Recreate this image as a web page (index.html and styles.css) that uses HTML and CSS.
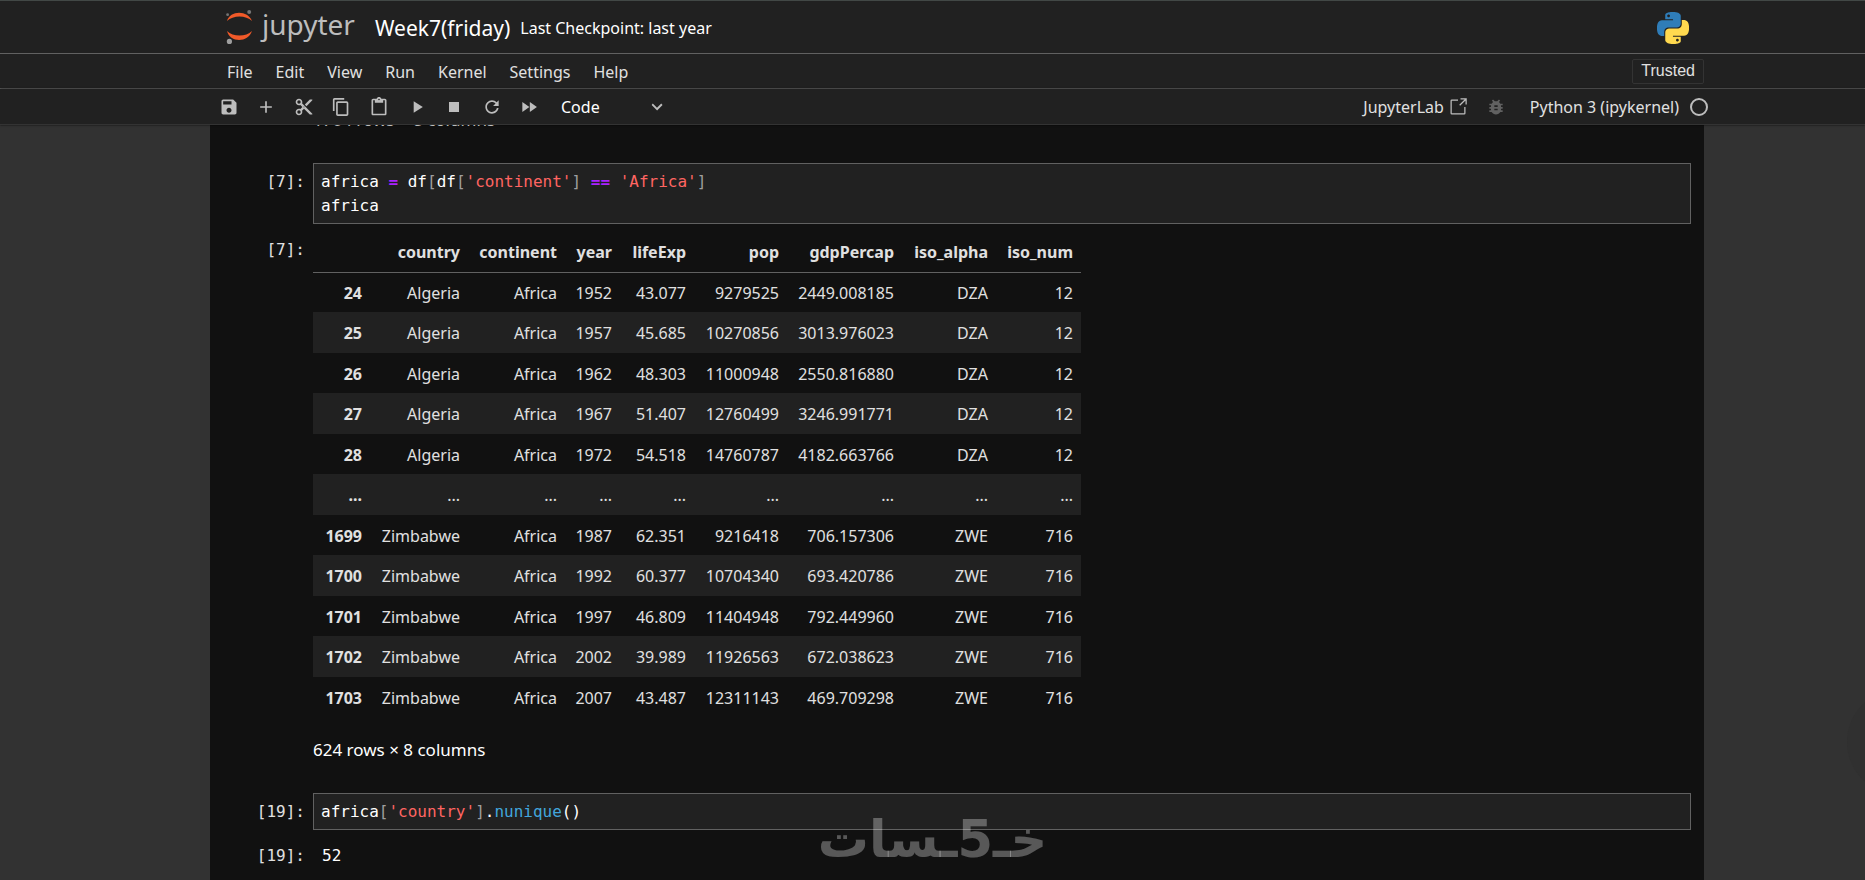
FILE: index.html
```html
<!DOCTYPE html>
<html lang="en">
<head>
  <meta charset="UTF-8">
  <meta name="viewport" content="width=device-width, initial-scale=1.0">
  <title>Week7(friday)</title>
  <link rel="stylesheet" href="styles.css">
</head>
<body>
  <header class="top">
    <a class="logo" href="#">
      <svg width="28" height="35" viewBox="0 0 28 35" aria-hidden="true">
        <path fill="#f15a29" d="M1 11C4 0 22 0 26 11C20 5 7 5 1 11z"/>
        <path fill="#f15a29" d="M1 21C4 33 22 33 26 21C20 27 7 27 1 21z"/>
        <circle fill="#757575" cx="23.2" cy="2.1" r="2"/>
        <circle fill="#757575" cx="1.6" cy="4.7" r="1.4"/>
        <circle fill="#9e9e9e" cx="3.4" cy="31.4" r="2.6"/>
      </svg>
      <span>jupyter</span>
    </a>
    <h1>Week7(friday)</h1>
    <span class="checkpoint">Last Checkpoint: last year</span>
    <svg class="python" width="32" height="32" viewBox="0 0 24 24" aria-hidden="true">
      <defs>
        <path id="snake" d="M14.25.18l.9.2.73.26.59.3.45.32.34.34.25.34.16.33.1.3.04.26.02.2-.01.13V8.5l-.05.63-.13.55-.21.46-.26.38-.3.31-.33.25-.35.19-.35.14-.33.1-.3.07-.26.04-.21.02H8.77l-.69.05-.59.14-.5.22-.41.27-.33.32-.27.35-.2.36-.15.37-.1.35-.07.32-.04.27-.02.21v3.06H3.17l-.21-.03-.28-.07-.32-.12-.35-.18-.36-.26-.36-.36-.35-.46-.32-.59-.28-.73-.21-.88-.14-1.05-.05-1.23.06-1.22.16-1.04.24-.87.32-.71.36-.57.4-.44.42-.33.42-.24.4-.16.36-.1.32-.05.24-.01h.16l.06.01h8.16v-.83H6.18l-.01-2.75-.02-.37.05-.34.11-.31.17-.28.25-.26.31-.23.38-.2.44-.18.51-.15.58-.12.64-.1.71-.06.77-.04.84-.02 1.27.05zm-6.3 1.98l-.23.33-.08.41.08.41.23.34.33.22.41.09.41-.09.33-.22.23-.34.08-.41-.08-.41-.23-.33-.33-.22-.41-.09-.41.09z"/>
      </defs>
      <use href="#snake" fill="#2f7db8"/>
      <use href="#snake" fill="#ffd94f" transform="rotate(180 12 12)"/>
    </svg>
  </header>

  <nav class="menu">
    <a href="#">File</a>
    <a href="#">Edit</a>
    <a href="#">View</a>
    <a href="#">Run</a>
    <a href="#">Kernel</a>
    <a href="#">Settings</a>
    <a href="#">Help</a>
    <button class="trusted">Trusted</button>
  </nav>

  <div class="toolbar">
    <div class="tools">
      <button aria-label="Save"><svg viewBox="0 0 24 24"><path d="M17 3H5c-1.11 0-2 .9-2 2v14c0 1.1.89 2 2 2h14c1.1 0 2-.9 2-2V7l-4-4zm-5 16c-1.66 0-3-1.34-3-3s1.34-3 3-3 3 1.34 3 3-1.34 3-3 3zm3-10H5V5h10v4z"/></svg></button>
      <button aria-label="Insert cell"><svg viewBox="0 0 24 24"><path d="M19 13h-6v6h-2v-6H5v-2h6V5h2v6h6v2z"/></svg></button>
      <button aria-label="Cut"><svg viewBox="0 0 24 24"><path d="M9.64 7.64c.23-.5.36-1.05.36-1.64 0-2.21-1.79-4-4-4S2 3.79 2 6s1.79 4 4 4c.59 0 1.14-.13 1.64-.36L10 12l-2.36 2.36C7.14 14.13 6.59 14 6 14c-2.21 0-4 1.79-4 4s1.79 4 4 4 4-1.79 4-4c0-.59-.13-1.14-.36-1.64L12 14l7 7h3v-1L9.64 7.64zM6 8c-1.1 0-2-.89-2-2s.9-2 2-2 2 .89 2 2-.9 2-2 2zm0 12c-1.1 0-2-.89-2-2s.9-2 2-2 2 .89 2 2-.9 2-2 2zm6-7.5c-.28 0-.5-.22-.5-.5s.22-.5.5-.5.5.22.5.5-.22.5-.5.5zM19 3l-6 6 2 2 7-7V3z"/></svg></button>
      <button aria-label="Copy"><svg viewBox="0 0 18 18"><path d="M11.9,1H3.2C2.4,1,1.7,1.7,1.7,2.5v10.2h1.5V2.5h8.7V1z M14.1,3.9h-8c-0.8,0-1.5,0.7-1.5,1.5v10.2c0,0.8,0.7,1.5,1.5,1.5h8 c0.8,0,1.5-0.7,1.5-1.5V5.4C15.5,4.6,14.9,3.9,14.1,3.9z M14.1,15.5h-8V5.4h8V15.5z"/></svg></button>
      <button aria-label="Paste"><svg viewBox="0 0 24 24"><path d="M19 2h-4.18C14.4.84 13.3 0 12 0c-1.3 0-2.4.84-2.82 2H5c-1.1 0-2 .9-2 2v16c0 1.1.9 2 2 2h14c1.1 0 2-.9 2-2V4c0-1.1-.9-2-2-2zm-7 0c.55 0 1 .45 1 1s-.45 1-1 1-1-.45-1-1 .45-1 1-1zm7 18H5V4h2v3h10V4h2v16z"/></svg></button>
      <button aria-label="Run"><svg viewBox="0 0 24 24"><path d="M8 5v14l11-7z"/></svg></button>
      <button aria-label="Stop"><svg viewBox="0 0 24 24"><path d="M6 6h12v12H6z"/></svg></button>
      <button aria-label="Restart"><svg viewBox="0 0 18 18"><path d="M9 13.5c-2.49 0-4.5-2.01-4.5-4.5S6.51 4.5 9 4.5c1.24 0 2.36.52 3.17 1.33L10 8h5V3l-1.76 1.76C12.15 3.68 10.66 3 9 3 5.69 3 3.01 5.69 3.01 9S5.69 15 9 15c2.97 0 5.43-2.16 5.9-5h-1.52c-.46 2-2.24 3.5-4.38 3.5z"/></svg></button>
      <button aria-label="Restart and run all"><svg viewBox="0 0 24 24"><path d="M4 18l8.5-6L4 6v12zm9-12v12l8.500-6L13 6z"/></svg></button>
    </div>
    <label class="celltype">
      <select aria-label="Cell type">
        <option>Code</option>
        <option>Markdown</option>
        <option>Raw</option>
      </select>
      <svg viewBox="0 0 18 18" aria-hidden="true"><path d="M5.2,5.900L9,9.700l3.800-3.800l1.200,1.200l-4.900,5l-4.900-5L5.200,5.900z"/></svg>
    </label>
    <div class="kernel">
      <a class="lab" href="#">JupyterLab
        <svg viewBox="0 0 32 32" aria-hidden="true"><path d="M26 28H6a2 2 0 01-2-2V6a2 2 0 012-2h10v2H6v20h20V16h2v10a2 2 0 01-2 2z"/><path d="M20 2v2h6.586L18 12.586 19.414 14 28 5.414V12h2V2H20z"/></svg>
      </a>
      <button class="bug" aria-label="Debugger"><svg viewBox="0 0 24 24"><path d="M20 8h-2.810c-.45-.78-1.070-1.450-1.820-1.960L17 4.410 15.590 3l-2.170 2.170C12.960 5.060 12.490 5 12 5s-.96.06-1.410.17L8.410 3 7 4.410l1.620 1.630C7.880 6.550 7.260 7.220 6.810 8H4v2h2.090c-.05.33-.09.66-.09 1v1H4v2h2v1c0 .34.04.67.09 1H4v2h2.810c1.040 1.790 2.970 3 5.190 3s4.150-1.210 5.190-3H20v-2h-2.090c.05-.33.09-.66.09-1v-1h2v-2h-2v-1c0-.34-.04-.67-.09-1H20V8zm-6 8h-4v-2h4v2zm0-4h-4v-2h4v2z"/></svg></button>
      <a class="python-kernel" href="#">Python 3 (ipykernel)</a>
      <svg class="status" viewBox="0 0 20 20" aria-hidden="true"><circle cx="10" cy="10" r="8"/></svg>
    </div>
  </div>

  <main>
    <div class="notebook">
      <p class="size first">1704 rows × 8 columns</p>

      <div class="cell">
        <span class="prompt">[7]:</span>
        <pre class="input">africa <b>=</b> df<i>[</i>df<i>[</i><q>'continent'</q><i>]</i> <b>==</b> <q>'Africa'</q><i>]</i>
africa</pre>
      </div>
      <div class="cell output">
        <span class="prompt">[7]:</span>
        <div>
          <table>
            <colgroup>
              <col class="w-index"><col class="w-country"><col class="w-continent"><col class="w-year"><col class="w-life"><col class="w-pop"><col class="w-gdp"><col class="w-alpha"><col class="w-num">
            </colgroup>
            <thead>
              <tr><th></th><th>country</th><th>continent</th><th>year</th><th>lifeExp</th><th>pop</th><th>gdpPercap</th><th>iso_alpha</th><th>iso_num</th></tr>
            </thead>
            <tbody>
              <tr><th>24</th><td>Algeria</td><td>Africa</td><td>1952</td><td>43.077</td><td>9279525</td><td>2449.008185</td><td>DZA</td><td>12</td></tr>
              <tr><th>25</th><td>Algeria</td><td>Africa</td><td>1957</td><td>45.685</td><td>10270856</td><td>3013.976023</td><td>DZA</td><td>12</td></tr>
              <tr><th>26</th><td>Algeria</td><td>Africa</td><td>1962</td><td>48.303</td><td>11000948</td><td>2550.816880</td><td>DZA</td><td>12</td></tr>
              <tr><th>27</th><td>Algeria</td><td>Africa</td><td>1967</td><td>51.407</td><td>12760499</td><td>3246.991771</td><td>DZA</td><td>12</td></tr>
              <tr><th>28</th><td>Algeria</td><td>Africa</td><td>1972</td><td>54.518</td><td>14760787</td><td>4182.663766</td><td>DZA</td><td>12</td></tr>
              <tr><th>...</th><td>...</td><td>...</td><td>...</td><td>...</td><td>...</td><td>...</td><td>...</td><td>...</td></tr>
              <tr><th>1699</th><td>Zimbabwe</td><td>Africa</td><td>1987</td><td>62.351</td><td>9216418</td><td>706.157306</td><td>ZWE</td><td>716</td></tr>
              <tr><th>1700</th><td>Zimbabwe</td><td>Africa</td><td>1992</td><td>60.377</td><td>10704340</td><td>693.420786</td><td>ZWE</td><td>716</td></tr>
              <tr><th>1701</th><td>Zimbabwe</td><td>Africa</td><td>1997</td><td>46.809</td><td>11404948</td><td>792.449960</td><td>ZWE</td><td>716</td></tr>
              <tr><th>1702</th><td>Zimbabwe</td><td>Africa</td><td>2002</td><td>39.989</td><td>11926563</td><td>672.038623</td><td>ZWE</td><td>716</td></tr>
              <tr><th>1703</th><td>Zimbabwe</td><td>Africa</td><td>2007</td><td>43.487</td><td>12311143</td><td>469.709298</td><td>ZWE</td><td>716</td></tr>
            </tbody>
          </table>
        </div>
      </div>
      <p class="size">624 rows × 8 columns</p>

      <div class="cell">
        <span class="prompt">[19]:</span>
        <pre class="input">africa<i>[</i><q>'country'</q><i>]</i>.<em>nunique</em>()</pre>
      </div>
      <div class="cell output">
        <span class="prompt">[19]:</span>
        <pre class="result">52</pre>
      </div>
    </div>
  </main>

  <div class="bubble"></div>
  <div class="watermark" lang="ar" dir="rtl">خـ5ـسات</div>
</body>
</html>
```

FILE: styles.css
```css
* {
  box-sizing: border-box;
}

body {
  margin: 0;
  height: 100vh;
  display: flex;
  flex-direction: column;
  overflow: hidden;
  background-color: #323232;
  color: #fff;
  font-family: "Noto Sans", "Open Sans", sans-serif;
  font-size: 16px;
  line-height: 24px;
}

a {
  color: #e0e0e0;
  text-decoration: none;
}

button {
  padding: 0;
  border: none;
  background: none;
  color: #e0e0e0;
}

svg {
  display: block;
  flex: none;
  fill: #bdbdbd;
}

/* header */
.top {
  display: flex;
  align-items: center;
  height: 54px;
  padding: 1px 176px 0 226px;
  background-color: #212121;
  border-top: 1px solid #424846;
  border-bottom: 1px solid #616161;
}

.logo {
  display: flex;
  align-items: center;
  gap: 8px;
  color: #bdbdbd;
  font-size: 28px;
}

.logo span {
  padding-bottom: 7px;
}

h1 {
  margin: 0 10px 0 20px;
  font-size: 21px;
  font-weight: 400;
}

.python {
  margin-left: auto;
}

.menu {
  display: flex;
  align-items: center;
  height: 35px;
  padding: 0 161px 0 216px;
  background-color: #212121;
  border-bottom: 1px solid #616161;
}

.menu a {
  padding: 2px 12px 0 11px;
}

.trusted {
  margin-left: auto;
  height: 25px;
  padding: 0 8px;
  border: 1px solid #333;
  border-radius: 2px;
  font-family: "Liberation Sans", Arial, sans-serif;
  font-size: 16px;
}

.toolbar {
  display: flex;
  align-items: center;
  height: 36px;
  padding: 1px 156px 0 210px;
  background-color: #212121;
  border-bottom: 1px solid #333;
  box-shadow: 0 0 2px rgba(0, 0, 0, 0.8);
  z-index: 1;
}

.toolbar svg {
  width: 20px;
  height: 20px;
}

.tools {
  display: flex;
  width: 338px;
}

.tools button {
  flex: 1;
  display: flex;
  justify-content: center;
}

.celltype {
  display: grid;
  align-items: center;
  width: 106px;
  margin-left: 13px;
}

.celltype select,
.celltype svg {
  grid-area: 1 / 1;
}

.celltype select {
  appearance: none;
  padding: 0;
  border: none;
  background: none;
  color: #fff;
  font: inherit;
}

.celltype option {
  background-color: #212121;
}

.celltype svg {
  justify-self: end;
  pointer-events: none;
}

.kernel {
  display: flex;
  align-items: center;
  margin-left: auto;
}

.lab {
  display: flex;
  align-items: center;
  gap: 4px;
}

.bug {
  margin: 0 24px 0 18px;
}

.bug svg {
  fill: #616161;
}

.python-kernel {
  margin-right: 10px;
}

.status circle {
  fill: none;
  stroke: #bdbdbd;
  stroke-width: 2px;
}

/* notebook */
main {
  flex: 1;
  min-height: 0;
  overflow: hidden;
  padding: 0 161px 0 210px;
}

.notebook {
  min-height: 100%;
  padding-right: 13px;
  background-color: #111;
  display: flow-root;
}

.cell {
  display: grid;
  grid-template-columns: 95px 1fr;
  column-gap: 8px;
}

.output {
  margin-top: 7px;
}

.prompt {
  padding-top: 7px;
  color: #e0e0e0;
  text-align: right;
}

.prompt,
pre {
  font-family: "DejaVu Sans Mono", monospace;
  font-size: 16px;
}

pre {
  margin: 0;
}

.input {
  padding: 6px 7px 5px;
  background-color: #212121;
  border: 1px solid #616161;
}

.input b {
  color: #aa22ff;
}

.input i {
  color: #9e9e9e;
  font-style: normal;
}

.input q {
  color: #ff6562;
  quotes: none;
}

.input em {
  color: #42a5dc;
  font-style: normal;
}

.result {
  padding: 7px 9px;
}

.size {
  margin: 21px 0 31px 103px;
  font-size: 17px;
}

.first {
  margin-top: -17px;
}

table {
  width: 768px;
  table-layout: fixed;
  border-collapse: collapse;
  color: #e0e0e0;
}

.w-index { width: 57px; }
.w-country { width: 98px; }
.w-continent { width: 97px; }
.w-year { width: 55px; }
.w-life { width: 74px; }
.w-pop { width: 93px; }
.w-gdp { width: 115px; }
.w-alpha { width: 94px; }
.w-num { width: 85px; }

th,
td {
  padding: 1px 8px 0 0;
  text-align: right;
  white-space: nowrap;
}

tr {
  height: 40px;
}

thead tr {
  height: 41px;
}

thead {
  border-bottom: 1px solid #616161;
}

tbody tr:nth-child(even) {
  height: 41px;
  background-color: #212121;
}

/* floating things */
.bubble {
  position: fixed;
  right: -88px;
  bottom: 85px;
  width: 106px;
  height: 106px;
  border-radius: 50%;
  background-color: #303030;
}

.watermark {
  position: fixed;
  left: 50%;
  bottom: 8px;
  transform: translateX(-50%);
  z-index: 2;
  color: rgba(255, 255, 255, 0.3);
  font-family: "DejaVu Sans", sans-serif;
  font-size: 51px;
  font-weight: 700;
  line-height: 64px;
  pointer-events: none;
}
```
